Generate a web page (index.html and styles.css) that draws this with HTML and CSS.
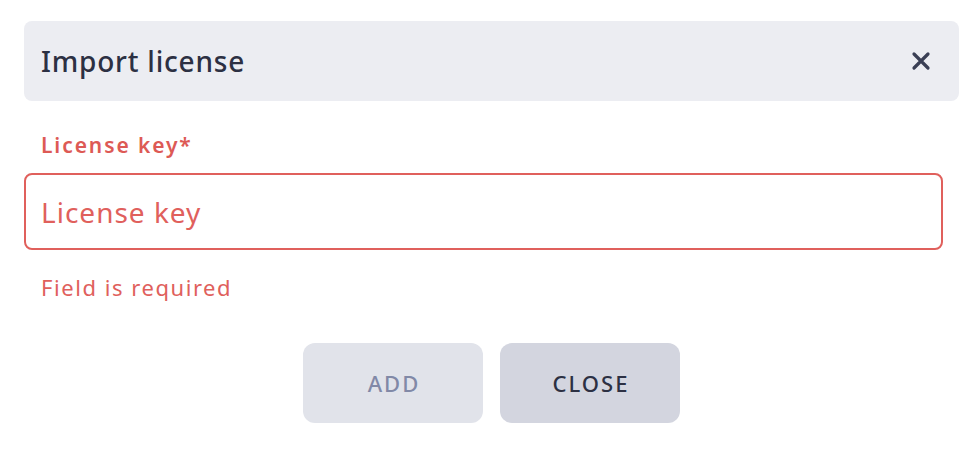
FILE: index.html
```html
<!DOCTYPE html>
<html>
<head>
<meta charset="utf-8">
<link rel="stylesheet" href="styles.css">
</head>
<body>
<div class="dialog">
  <div class="header">
    <span class="title">Import license</span>
    <button class="close-x" aria-label="Close">
      <svg width="22" height="22" viewBox="0 0 22 22"><path d="M4 4L18 18M18 4L4 18" stroke="#3a3f55" stroke-width="3.2" stroke-linecap="round"/></svg>
    </button>
  </div>
  <div class="field">
    <label class="label">License key*</label>
    <div class="input">License key</div>
    <div class="error">Field is required</div>
  </div>
  <div class="actions">
    <button class="btn btn-add">ADD</button>
    <button class="btn btn-close">CLOSE</button>
  </div>
</div>
</body>
</html>
```
FILE: styles.css
```css
html, body { margin: 0; padding: 0; background: #ffffff; }
body { font-family: "Noto Sans", "Open Sans", sans-serif; }
.dialog { width: 935px; margin: 21px 0 0 24px; }
.header {
  height: 80px; background: #ecedf2; border-radius: 8px;
  display: flex; align-items: center; justify-content: space-between;
  padding: 0 27px 0 17px; box-sizing: border-box;
}
.title { font-size: 28px; font-weight: 500; color: #2c3043; letter-spacing: 0.8px; }
.close-x { background: none; border: 0; padding: 0; width: 22px; height: 22px; display: flex; }
.field { width: 919px; padding-top: 30px; }
.label { display: block; padding-left: 17px; font-size: 21px; font-weight: 600; color: #dd5a55; line-height: 28px; letter-spacing: 1.9px; }
.input {
  margin-top: 14px; height: 77px; box-sizing: border-box;
  border: 2px solid #e0605c; border-radius: 8px;
  display: flex; align-items: center; padding-left: 15px;
  font-size: 28px; color: #e0605c; letter-spacing: 1px;
}
.error { padding-left: 17px; margin-top: 23px; font-size: 22px; color: #e0605c; line-height: 28px; letter-spacing: 1.55px; }
.actions { display: flex; justify-content: center; gap: 17px; margin-top: 42px; }
.btn {
  width: 180px; height: 80px; border: 0; border-radius: 12px;
  font-family: inherit; font-size: 22px; font-weight: 500; letter-spacing: 2px;
  padding: 0 0 0 2px;
}
.btn-add { background: #e1e3ea; color: #8189a7; }
.btn-close { background: #d3d5df; color: #2c3043; }
```
